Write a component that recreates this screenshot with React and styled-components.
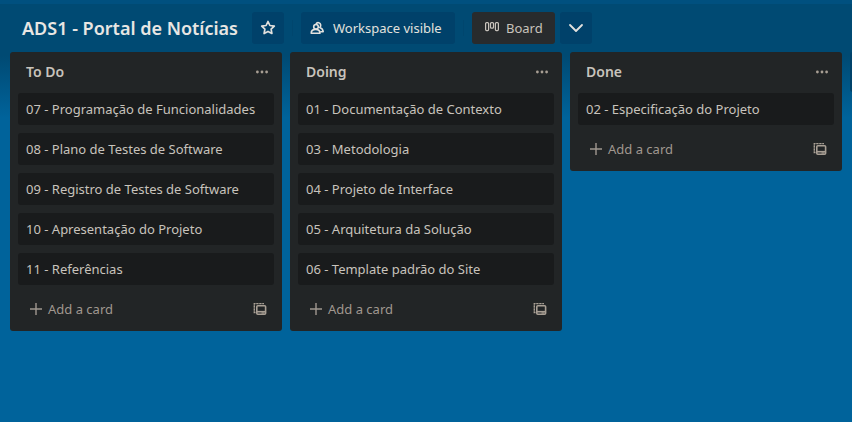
import React from "react";
import styled, { createGlobalStyle } from "styled-components";

const GlobalStyle = createGlobalStyle`
  *, *::before, *::after { box-sizing: border-box; }
  body {
    margin: 0;
    min-height: 100vh;
    background: #00639b;
    color: #c8c3bc;
    font-family: "Segoe UI", "Noto Sans", "Open Sans", sans-serif;
    font-size: 13px;
    line-height: 20px;
  }
  button { font: inherit; color: inherit; border: 0; cursor: pointer; }
  svg { display: block; flex: none; }
`;

const Page = styled.div`
  min-height: 100vh;
  overflow: hidden;
  background: linear-gradient(#004a73 52px, #00639b 114px);
  border-top: 4px solid #00507f;
`;

const Toolbar = styled.header`
  display: flex;
  align-items: center;
  padding: 8px 10px;
  color: #e8e6e3;
`;

const Title = styled.h1`
  margin: 0;
  padding: 0 12px;
  min-width: 242px;
  font-size: 18px;
  line-height: 32px;
  font-weight: 600;
  white-space: nowrap;
`;

const ToolButton = styled.button`
  display: flex;
  align-items: center;
  gap: ${(p) => (p.$active ? 6 : 8)}px;
  height: 32px;
  min-width: ${(p) => p.$width || 32}px;
  padding: 0 ${(p) => (p.$active ? 12 : 8)}px;
  border-radius: 3px;
  white-space: nowrap;
  background: ${(p) => (p.$active ? "#282b2d" : "#00416a")};
  && { color: ${(p) => (p.$active ? "#c8c3bc" : "#e2e1de")}; }
  margin-left: ${(p) => (p.$tight ? 5 : 0)}px;
`;

const Divider = styled.span`
  width: 1px;
  height: 16px;
  margin: 0 8px;
  background: #00466e;
`;

const Board = styled.main`
  display: flex;
  align-items: flex-start;
  gap: 8px;
  padding: 0 10px;
`;

const List = styled.section`
  flex: 0 0 272px;
  min-width: 0;
  padding: 0 8px;
  border-radius: 3px;
  background: #222526;
`;

const NewList = styled.button`
  flex: 0 0 272px;
  height: 40px;
  border-radius: 3px;
  background: #00426a;
`;

const ListHeader = styled.div`
  display: flex;
  align-items: center;
  justify-content: space-between;
  height: 40px;
  margin-bottom: 1px;
  padding-left: 8px;
`;

const ListTitle = styled.h2`
  margin: 0;
  font-size: 14px;
  line-height: 20px;
  font-weight: 600;
`;

const IconButton = styled.button`
  display: grid;
  place-items: center;
  width: 24px;
  height: 32px;
  padding: 0;
  background: none;
  && { color: #a89f94; }
`;

const Cards = styled.ul`
  display: flex;
  flex-direction: column;
  gap: 8px;
  margin: 0;
  padding: 0;
  list-style: none;
`;

const Card = styled.li`
  padding: 6px 8px;
  border-radius: 3px;
  background: #191b1c;
  white-space: nowrap;
`;

const ListFooter = styled.div`
  display: flex;
  align-items: center;
  justify-content: space-between;
  height: 46px;
  padding: 2px 2px 0 0;
`;

const AddCard = styled.button`
  display: flex;
  align-items: center;
  gap: 6px;
  padding: 4px 8px 4px 12px;
  background: none;
  && { color: #a09890; }
`;

const StarIcon = () => (
  <svg width="16" height="16" viewBox="0 0 16 16" fill="none" stroke="currentColor" strokeWidth="1.7" strokeLinejoin="round" aria-hidden="true">
    <path d="M8 1.5 9.9 5.5 14.3 6.1 11.1 9.1 11.9 13.5 8 11.4 4.1 13.5 4.9 9.1 1.7 6.1 6.1 5.5Z" />
  </svg>
);

const PeopleIcon = () => (
  <svg width="16" height="16" viewBox="0 0 16 16" fill="none" stroke="currentColor" strokeWidth="1.6" strokeLinejoin="round" aria-hidden="true">
    <circle cx="7" cy="6.8" r="2.3" />
    <path d="M2.2 13.2c0-2.4 1.8-3.8 4.4-3.8s4.4 1.4 4.4 3.8Z" />
    <path d="M7 4C7.6 2.8 8.7 2.4 9.8 2.7c2.2.6 2.5 3.4 1 4.8 1.9.7 3.1 2 3.4 4.2h-3" />
  </svg>
);

const BoardIcon = () => (
  <svg width="16" height="16" viewBox="0 0 16 16" fill="none" stroke="currentColor" strokeWidth="1.2" aria-hidden="true">
    <rect x="1.6" y="2.6" width="3" height="8" rx="1" />
    <rect x="6.5" y="2.6" width="3" height="5.6" rx="1" />
    <rect x="11.4" y="2.6" width="3" height="8" rx="1" />
  </svg>
);

const ChevronIcon = () => (
  <svg width="16" height="16" viewBox="0 0 16 16" fill="none" stroke="currentColor" strokeWidth="1.8" strokeLinecap="round" strokeLinejoin="round" aria-hidden="true">
    <path d="m2 5 6 6 6-6" />
  </svg>
);

const MoreIcon = () => (
  <svg width="14" height="14" viewBox="0 0 14 14" fill="currentColor" aria-hidden="true">
    <circle cx="2.4" cy="7" r="1.4" />
    <circle cx="7" cy="7" r="1.4" />
    <circle cx="11.6" cy="7" r="1.4" />
  </svg>
);

const PlusIcon = () => (
  <svg width="12" height="12" viewBox="0 0 12 12" stroke="currentColor" strokeWidth="1.4" aria-hidden="true">
    <path d="M6 0v12M0 6h12" />
  </svg>
);

const TemplateIcon = () => (
  <svg width="14" height="14" viewBox="0 0 14 14" fill="none" stroke="currentColor" aria-hidden="true">
    <path d="M2.5 10.5H1.3V1.6H11" strokeWidth="1.4" strokeDasharray="2.4 0.6" />
    <rect x="3.8" y="3.8" width="8.8" height="8.4" rx="1" strokeWidth="1.6" />
    <path d="M4 9.7h8.5" strokeWidth="1.6" />
    <path d="M8.5 11h3" strokeWidth="1.2" />
  </svg>
);

const lists = [
  {
    title: "To Do",
    cards: [
      "07 - Programação de Funcionalidades",
      "08 - Plano de Testes de Software",
      "09 - Registro de Testes de Software",
      "10 - Apresentação do Projeto",
      "11 - Referências",
    ],
  },
  {
    title: "Doing",
    cards: [
      "01 - Documentação de Contexto",
      "03 - Metodologia",
      "04 - Projeto de Interface",
      "05 - Arquitetura da Solução",
      "06 - Template padrão do Site",
    ],
  },
  { title: "Done", cards: ["02 - Especificação do Projeto"] },
];

export default function App() {
  return (
    <Page>
      <GlobalStyle />
      <Toolbar>
        <Title>ADS1 - Portal de Notícias</Title>
        <ToolButton aria-label="Star board"><StarIcon /></ToolButton>
        <Divider />
        <ToolButton $width={154}><PeopleIcon />Workspace visible</ToolButton>
        <Divider />
        <ToolButton $active $width={82}><BoardIcon />Board</ToolButton>
        <ToolButton $tight aria-label="Views"><ChevronIcon /></ToolButton>
      </Toolbar>
      <Board>
        {lists.map((list) => (
          <List key={list.title}>
            <ListHeader>
              <ListTitle>{list.title}</ListTitle>
              <IconButton aria-label={`${list.title} actions`}><MoreIcon /></IconButton>
            </ListHeader>
            <Cards>
              {list.cards.map((card) => <Card key={card}>{card}</Card>)}
            </Cards>
            <ListFooter>
              <AddCard><PlusIcon />Add a card</AddCard>
              <IconButton aria-label="Create from template"><TemplateIcon /></IconButton>
            </ListFooter>
          </List>
        ))}
        <NewList aria-label="Add another list" />
      </Board>
    </Page>
  );
}
